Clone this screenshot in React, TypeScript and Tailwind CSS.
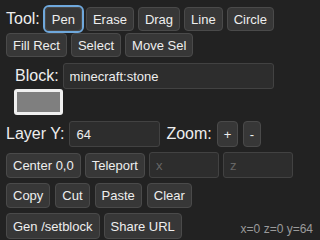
const btn =
  "h-[24px] rounded-[4px] border border-[#4a4a4a] bg-[#373737] px-[6px] text-[13px] leading-none text-[#eeeeee]";
const inp =
  "h-[26px] rounded-[3px] border border-[#424242] bg-[#2d2d2d] px-[6px] text-[13px] text-[#eeeeee] placeholder:text-[#666666] outline-none";

export default function App() {
  return (
    <div
      className="h-[240px] w-[320px] overflow-hidden bg-[#222222] text-[#eeeeee]"
      style={{ fontFamily: '"Liberation Sans", Arial, sans-serif' }}
    >
      {/* tools */}
      <div className="flex flex-wrap items-center gap-x-[4px] gap-y-[2px] pl-[6px] pr-[6px] pt-[7px]">
        <span className="mr-[1px] text-[16px]">Tool:</span>
        <button className={`${btn} outline outline-2 outline-offset-[0px] outline-[#6fa8dc]`}>Pen</button>
        <button className={btn}>Erase</button>
        <button className={btn}>Drag</button>
        <button className={btn}>Line</button>
        <button className={btn}>Circle</button>
        <button className={btn}>Fill Rect</button>
        <button className={btn}>Select</button>
        <button className={btn}>Move Sel</button>
      </div>

      {/* block */}
      <div className="mt-[6px] flex flex-wrap items-center gap-x-[4px] pl-[14px]">
        <span className="ml-[1px] text-[16px]">Block:</span>
        <input className={`${inp} w-[211px]`} defaultValue="minecraft:stone" />
        <div className="h-[26px] w-[49px] rounded-[3px] border-[3px] border-[#f0f0f0] bg-[#7f7f7f]" />
      </div>

      {/* layer / zoom */}
      <div className="mt-[6px] flex items-center gap-x-[5px] pl-[6px]">
        <span className="text-[16px]">Layer Y:</span>
        <input className={`${inp} w-[91px]`} defaultValue="64" />
        <span className="ml-[1px] text-[16px]">Zoom:</span>
        <button className={`${btn} h-[26px] w-[21px] px-0`}>+</button>
        <button className={`${btn} h-[26px] w-[18px] px-0`}>-</button>
      </div>

      {/* view */}
      <div className="mt-[5px] flex items-center gap-x-[4px] pl-[6px]">
        <button className={`${btn} h-[25px]`}>Center 0,0</button>
        <button className={`${btn} h-[25px]`}>Teleport</button>
        <input className={`${inp} w-[70px]`} placeholder="x" />
        <input className={`${inp} w-[70px]`} placeholder="z" />
      </div>

      {/* clipboard */}
      <div className="mt-[5px] flex items-center gap-x-[5px] pl-[6px]">
        <button className={`${btn} h-[25px]`}>Copy</button>
        <button className={`${btn} h-[25px]`}>Cut</button>
        <button className={`${btn} h-[25px]`}>Paste</button>
        <button className={`${btn} h-[25px]`}>Clear</button>
      </div>

      {/* export */}
      <div className="mt-[5px] flex items-center gap-x-[4px] pl-[6px]">
        <button className={`${btn} h-[26px]`}>Gen /setblock</button>
        <button className={`${btn} h-[26px]`}>Share URL</button>
        <span className="ml-auto mr-[7px] mt-[6px] text-[12px] text-[#9a9a9a]">x=0 z=0 y=64</span>
      </div>
    </div>
  );
}
